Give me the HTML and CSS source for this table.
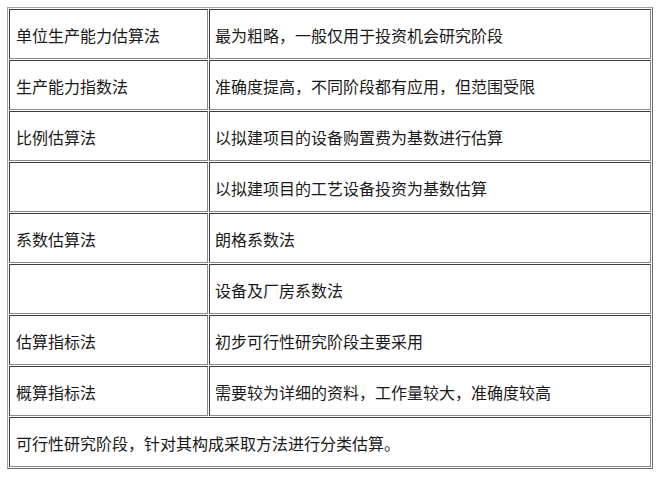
FILE: index.html
```html
<!DOCTYPE html>
<html lang="zh-CN">
<head>
<meta charset="utf-8">
<link rel="stylesheet" href="styles.css">
</head>
<body>
<table class="grid">
  <tr><td class="name">单位生产能力估算法</td><td class="desc">最为粗略，一般仅用于投资机会研究阶段</td></tr>
  <tr><td class="name">生产能力指数法</td><td class="desc">准确度提高，不同阶段都有应用，但范围受限</td></tr>
  <tr><td class="name">比例估算法</td><td class="desc">以拟建项目的设备购置费为基数进行估算</td></tr>
  <tr><td class="name"></td><td class="desc">以拟建项目的工艺设备投资为基数估算</td></tr>
  <tr><td class="name">系数估算法</td><td class="desc">朗格系数法</td></tr>
  <tr><td class="name"></td><td class="desc">设备及厂房系数法</td></tr>
  <tr><td class="name">估算指标法</td><td class="desc">初步可行性研究阶段主要采用</td></tr>
  <tr><td class="name">概算指标法</td><td class="desc">需要较为详细的资料，工作量较大，准确度较高</td></tr>
  <tr><td class="full" colspan="2">可行性研究阶段，针对其构成采取方法进行分类估算。</td></tr>
</table>
</body>
</html>
```

FILE: styles.css
```css
html, body {
  margin: 0;
  padding: 0;
  background: #ffffff;
}
body {
  padding: 7px;
  font-family: "Noto Sans CJK SC", "Noto Sans", sans-serif;
  font-size: 16px;
  color: #1a1a1a;
}
.grid {
  width: 646px;
  border-collapse: separate;
  border-spacing: 1px;
  border-style: solid;
  border-width: 1px;
  border-color: #a0a0a0 #6a6a6a #6a6a6a #a0a0a0;
}
.grid td {
  height: 50px;
  padding: 1px 6px 0;
  box-sizing: border-box;
  vertical-align: middle;
  border-style: solid;
  border-width: 1px;
  border-color: #3c3c3c #8a8a8a #8a8a8a #3c3c3c;
  line-height: 20px;
  white-space: nowrap;
}
.grid td.name {
  width: 199px;
}
.grid td.desc {
  padding-left: 5px;
}
```
